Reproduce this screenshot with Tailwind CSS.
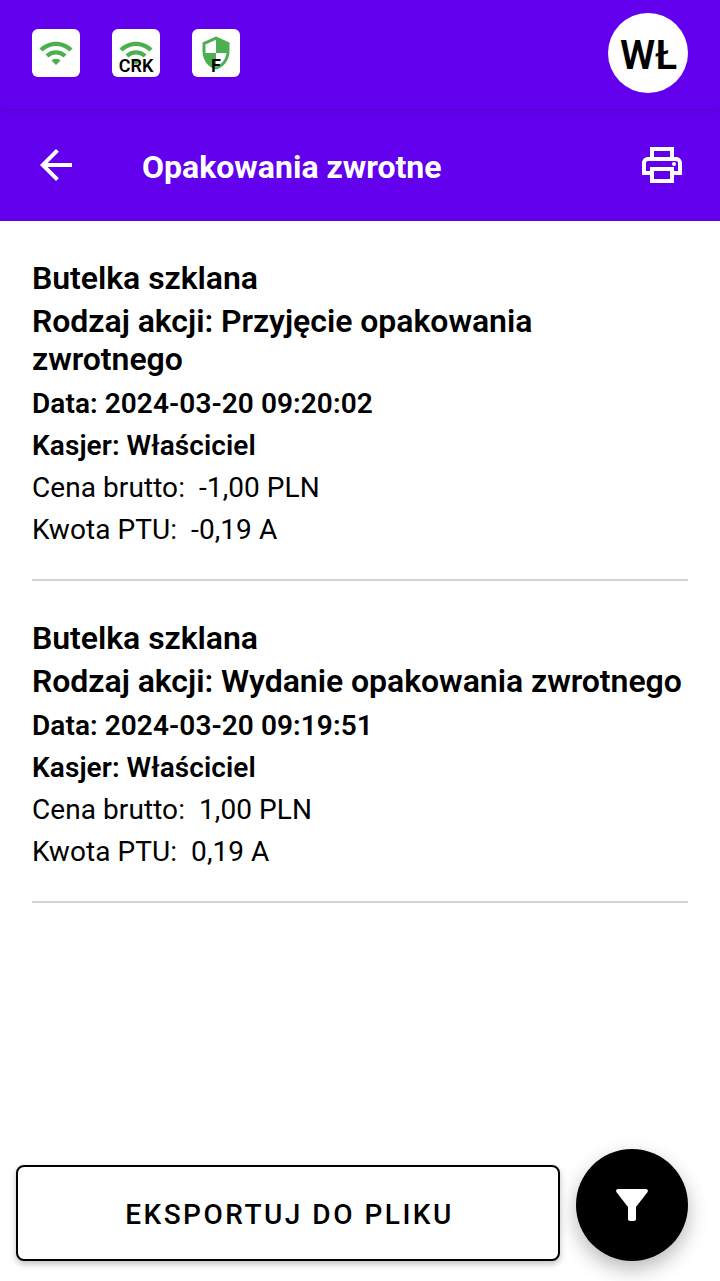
<!DOCTYPE html>
<html lang="pl">

<head>
    <meta charset="UTF-8">
    <meta name="viewport" content="width=device-width, initial-scale=1.0">
    <title>Opakowania zwrotne</title>
    <script src="https://cdn.jsdelivr.net/npm/@tailwindcss/browser@4"></script>
</head>
<body class="h-[1281px] flex flex-col bg-white text-black font-['Roboto',sans-serif] overflow-hidden">

    <!-- Status bar -->
    <div class="relative z-10 h-[109px] shrink-0 bg-[#6200ee] px-8 pt-[13px] flex items-start justify-between shadow-[0_1px_6px_rgba(0,0,0,0.15)]">
        <div class="flex gap-8 mt-4">
            <div class="w-12 h-12 bg-white rounded-md flex items-center justify-center">
                <svg class="w-9 h-9" fill="#4caf50" viewBox="0 0 24 24">
                    <path d="M1 9l2 2c4.97-4.97 13.03-4.97 18 0l2-2C16.93 2.93 7.08 2.93 1 9zm8 8l3 3 3-3c-1.65-1.66-4.34-1.66-6 0zm-4-4l2 2c2.76-2.76 7.24-2.76 10 0l2-2C15.14 9.14 8.87 9.14 5 13z" />
                </svg>
            </div>
            <div class="relative w-12 h-12 bg-white rounded-md flex items-center justify-center">
                <svg class="w-9 h-9" fill="#4caf50" viewBox="0 0 24 24">
                    <path d="M1 9l2 2c4.97-4.97 13.03-4.97 18 0l2-2C16.93 2.93 7.08 2.93 1 9zm8 8l3 3 3-3c-1.65-1.66-4.34-1.66-6 0zm-4-4l2 2c2.76-2.76 7.24-2.76 10 0l2-2C15.14 9.14 8.87 9.14 5 13z" />
                </svg>
                <span class="absolute inset-x-0 bottom-0 text-center text-[18px] leading-[22px] font-semibold">CRK</span>
            </div>
            <div class="relative w-12 h-12 bg-white rounded-md flex items-center justify-center">
                <svg class="w-9 h-9" fill="#4caf50" viewBox="0 0 24 24">
                    <path d="M12 1L3 5v6c0 5.55 3.84 10.74 9 12 5.16-1.26 9-6.45 9-12V5l-9-4zm0 10.99h7c-.53 4.12-3.28 7.79-7 8.94V12H5V6.3l7-3.11v8.8z" />
                </svg>
                <span class="absolute inset-x-0 bottom-0 text-center text-[18px] leading-[22px] font-semibold">F</span>
            </div>
        </div>
        <div class="w-20 h-20 bg-white rounded-full flex items-center justify-center text-[40px] leading-none font-semibold pt-1.5 pl-px">WŁ</div>
    </div>

    <!-- App bar -->
    <header class="h-28 shrink-0 bg-[#6200ee] text-white pl-8 pr-[34px] flex items-center">
        <button aria-label="Wstecz">
            <svg class="w-12 h-12" fill="currentColor" viewBox="0 0 24 24">
                <path d="M20 11H7.83l5.59-5.59L12 4l-8 8 8 8 1.41-1.41L7.83 13H20v-2z" />
            </svg>
        </button>
        <h1 class="ml-[62px] mt-1 text-[32px] leading-[38px] font-bold">Opakowania zwrotne</h1>
        <button class="ml-auto" aria-label="Drukuj">
            <svg class="w-12 h-12" fill="currentColor" viewBox="0 0 24 24">
                <path d="M19 8h-1V3H6v5H5c-1.66 0-3 1.34-3 3v6h4v4h12v-4h4v-6c0-1.66-1.34-3-3-3zM8 5h8v3H8V5zm8 12v2H8v-4h8v2zm2-2v-2H6v2H4v-4c0-.55.45-1 1-1h14c.55 0 1 .45 1 1v4h-2z" />
                <circle cx="18" cy="11.5" r="1" />
            </svg>
        </button>
    </header>

    <!-- List -->
    <main class="flex-1 px-8">
        <div class="pt-[38px] pb-[33px] border-b-2 border-[#d3d3d3]">
            <div class="flex flex-col gap-[5px] text-[32px] leading-[38px] font-semibold tracking-[-0.04px]">
                <h2>Butelka szklana</h2>
                <p>Rodzaj akcji: Przyjęcie opakowania zwrotnego</p>
            </div>
            <div class="flex flex-col gap-[9px] mt-[9px] text-[28px] leading-[33px] tracking-[0.07px]">
                <p class="font-semibold">Data: 2024-03-20 09:20:02</p>
                <p class="font-semibold">Kasjer: Właściciel</p>
                <p>Cena brutto:&nbsp; -1,00 PLN</p>
                <p>Kwota PTU:&nbsp; -0,19 A</p>
            </div>
        </div>
        <div class="pt-[38px] pb-[33px] border-b-2 border-[#d3d3d3]">
            <div class="flex flex-col gap-[5px] text-[32px] leading-[38px] font-semibold tracking-[-0.04px]">
                <h2>Butelka szklana</h2>
                <p>Rodzaj akcji: Wydanie opakowania zwrotnego</p>
            </div>
            <div class="flex flex-col gap-[9px] mt-[9px] text-[28px] leading-[33px] tracking-[0.07px]">
                <p class="font-semibold">Data: 2024-03-20 09:19:51</p>
                <p class="font-semibold">Kasjer: Właściciel</p>
                <p>Cena brutto:&nbsp; 1,00 PLN</p>
                <p>Kwota PTU:&nbsp; 0,19 A</p>
            </div>
        </div>
    </main>

    <!-- Bottom actions -->
    <footer class="shrink-0 flex items-end gap-4 pl-4 pr-8 pb-5">
        <button class="flex-1 h-24 pt-1 pl-[3px] bg-white border-2 border-black rounded-lg text-[28px] font-medium tracking-[2.5px] shadow-[0_3px_6px_rgba(0,0,0,0.25)]">EKSPORTUJ DO PLIKU</button>
        <button class="w-28 h-28 bg-black text-white rounded-full flex items-center justify-center shadow-[0_8px_20px_rgba(0,0,0,0.28)]" aria-label="Filtruj">
            <svg class="w-12 h-12" fill="currentColor" viewBox="0 0 24 24">
                <path d="M4.25 5.61C6.27 8.2 10 13 10 13v6c0 .55.45 1 1 1h2c.55 0 1-.45 1-1v-6s3.72-4.8 5.74-7.39A1 1 0 0 0 18.95 4H5.04a1 1 0 0 0-.79 1.61z" />
            </svg>
        </button>
    </footer>
</body>
</html>
